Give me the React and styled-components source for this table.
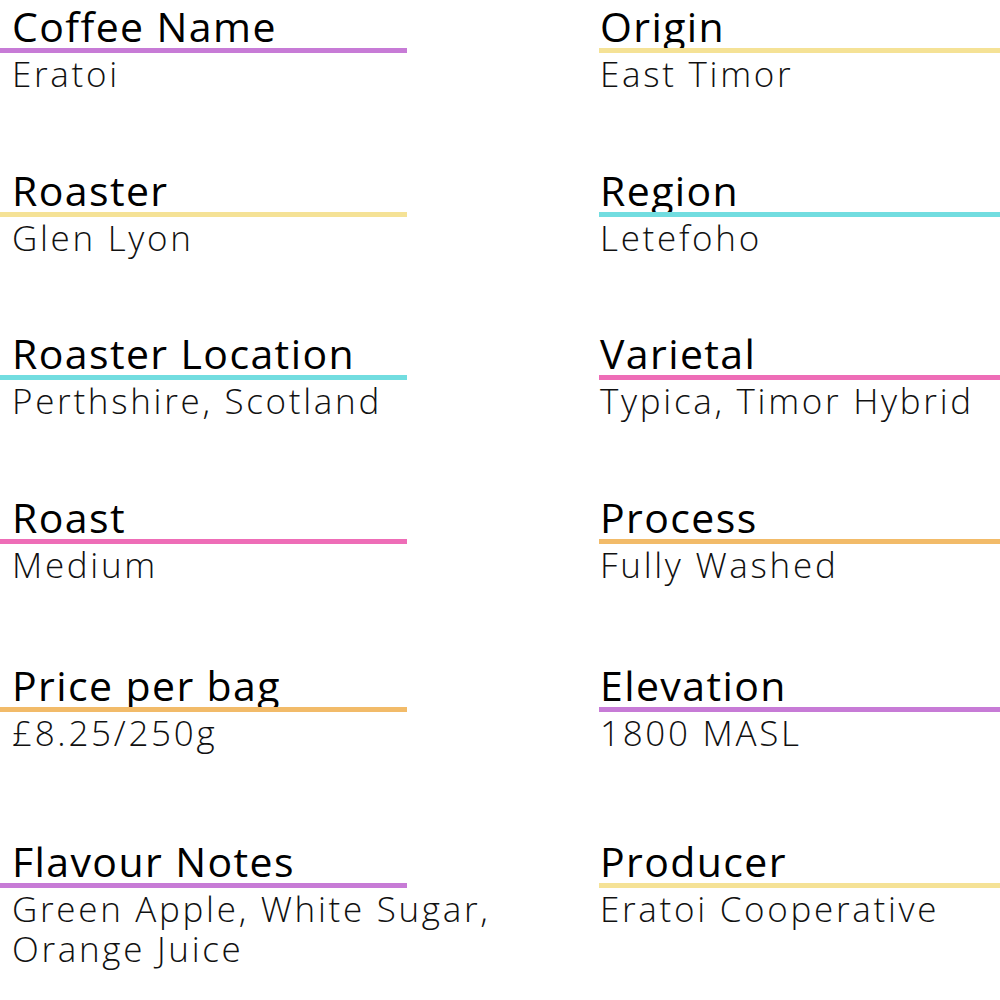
import React from "react";
import styled, { createGlobalStyle } from "styled-components";

const GlobalStyle = createGlobalStyle`
  *, *::before, *::after {
    box-sizing: border-box;
  }
  body {
    margin: 0;
    background: #ffffff;
    font-family: "Open Sans", "Noto Sans", sans-serif;
    color: #111111;
  }
`;

const Sheet = styled.div`
  width: 1000px;
  height: 1000px;
  display: grid;
  grid-template-columns: 407px 401px;
  column-gap: 192px;
  grid-template-rows: 164px 163px 164px 168px 176px auto;
  grid-auto-flow: column;
  overflow: hidden;
`;

const Field = styled.div`
  display: flex;
  flex-direction: column;
`;

const Label = styled.div`
  height: 48px;
  padding-top: 6px;
  padding-left: ${(p) => p.$indent}px;
  font-size: 41px;
  line-height: 40px;
  letter-spacing: 1.4px;
  font-weight: 400;
  color: #000;
  white-space: nowrap;
`;

const Rule = styled.div`
  height: 5px;
  background: ${(p) => p.$color};
`;

const Value = styled.div`
  width: 500px;
  padding-top: 1px;
  padding-left: ${(p) => p.$indent}px;
  font-size: 35px;
  line-height: 40px;
  letter-spacing: 2.7px;
  font-weight: 300;
  color: #111;
`;

const purple = "#c77bd6";
const yellow = "#f5e296";
const cyan = "#72dde0";
const pink = "#ee6db7";
const orange = "#f2bb69";

const left = [
  ["Coffee Name", "Eratoi", purple],
  ["Roaster", "Glen Lyon", yellow],
  ["Roaster Location", "Perthshire, Scotland", cyan],
  ["Roast", "Medium", pink],
  ["Price per bag", "£8.25/250g", orange],
  ["Flavour Notes", "Green Apple, White Sugar, Orange Juice", purple],
];

const right = [
  ["Origin", "East Timor", yellow],
  ["Region", "Letefoho", cyan],
  ["Varietal", "Typica, Timor Hybrid", pink],
  ["Process", "Fully Washed", orange],
  ["Elevation", "1800 MASL", purple],
  ["Producer", "Eratoi Cooperative", yellow],
];

const Column = ({ items, indent }) =>
  items.map(([label, value, color]) => (
    <Field key={label}>
      <Label $indent={indent}>{label}</Label>
      <Rule $color={color} />
      <Value $indent={indent}>{value}</Value>
    </Field>
  ));

const App = () => (
  <>
    <GlobalStyle />
    <Sheet>
      <Column items={left} indent={12} />
      <Column items={right} indent={1} />
    </Sheet>
  </>
);

export default App;
